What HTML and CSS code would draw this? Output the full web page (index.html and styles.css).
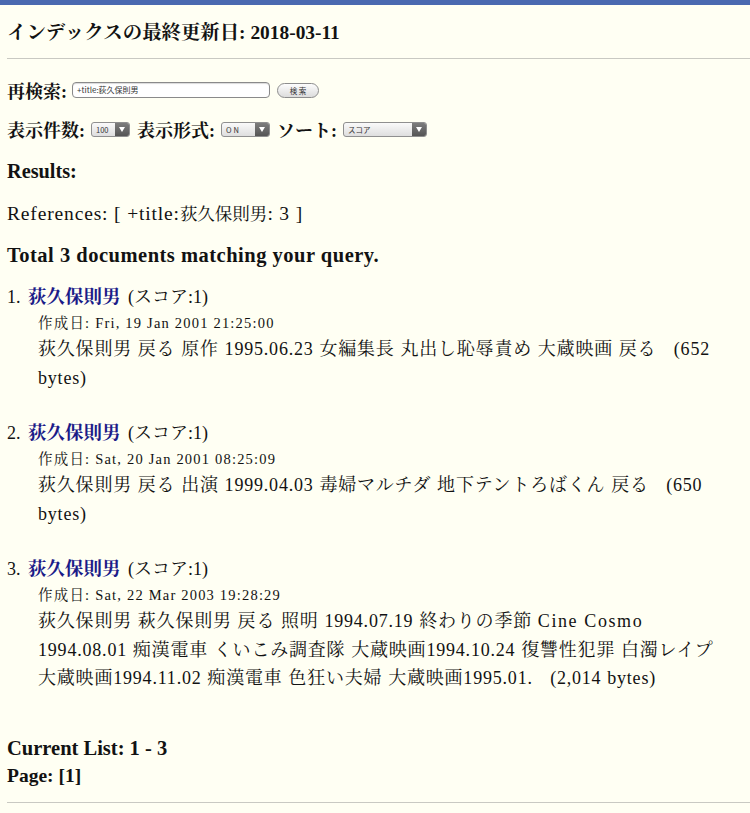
FILE: index.html
```html
<!DOCTYPE html>
<html lang="ja">
<head>
<meta charset="utf-8">
<title>検索結果</title>
<link rel="stylesheet" href="styles.css">
</head>
<body>
<div class="page">
  <h2 class="title">インデックスの最終更新日: 2018-03-11</h2>
  <hr class="rule">
  <form class="form">
    <div class="row">
      <span class="label">再検索:</span>
      <span class="textbox">+title:荻久保則男</span>
      <span class="button">検 索</span>
    </div>
    <div class="row row2">
      <span class="label">表示件数:</span>
      <span class="select s-num"><span class="sel-text">100</span><span class="arrow"></span></span>
      <span class="label">表示形式:</span>
      <span class="select s-fmt"><span class="sel-text wide">ON</span><span class="arrow"></span></span>
      <span class="label">ソート:</span>
      <span class="select s-sort"><span class="sel-text">スコア</span><span class="arrow"></span></span>
    </div>
  </form>
  <h3 class="results">Results:</h3>
  <p class="refs">References: [ +title:<span class="cjk">荻久保則男</span>: 3 ]</p>
  <p class="total">Total 3 documents matching your query.</p>
  <dl class="hits">
    <dt class="hit-head">1. <a href="#" class="hit-link">荻久保則男</a> (スコア:1)</dt>
    <dd class="hit-body">
      <div class="date">作成日: Fri, 19 Jan 2001 21:25:00</div>
      <div class="summary">荻久保則男 戻る 原作 1995.06.23 女編集長 丸出し恥辱責め 大蔵映画 戻る&nbsp;&nbsp; (652 bytes)</div>
    </dd>
    <dt class="hit-head">2. <a href="#" class="hit-link">荻久保則男</a> (スコア:1)</dt>
    <dd class="hit-body">
      <div class="date">作成日: Sat, 20 Jan 2001 08:25:09</div>
      <div class="summary">荻久保則男 戻る 出演 1999.04.03 毒婦マルチダ 地下テントろばくん 戻る&nbsp;&nbsp; (650 bytes)</div>
    </dd>
    <dt class="hit-head">3. <a href="#" class="hit-link">荻久保則男</a> (スコア:1)</dt>
    <dd class="hit-body">
      <div class="date">作成日: Sat, 22 Mar 2003 19:28:29</div>
      <div class="summary">荻久保則男 萩久保則男 戻る 照明 1994.07.19 終わりの季節 <span class="lat">Cine Cosmo</span> 1994.08.01 痴漢電車 くいこみ調査隊 大蔵映画1994.10.24 復讐性犯罪 白濁レイプ 大蔵映画1994.11.02 痴漢電車 色狂い夫婦 大蔵映画1995.01.&nbsp;&nbsp; (2,014 bytes)</div>
    </dd>
  </dl>
  <p class="current">Current List: 1 - 3</p>
  <p class="pager">Page: [1]</p>
  <hr class="rule bottom">
</div>
</body>
</html>
```

FILE: styles.css
```css
html, body {
  margin: 0;
  padding: 0;
  background: #fffff3;
}
body {
  border-top: 5px solid #4a69b0;
  font-family: "Liberation Serif", "Noto Serif CJK JP", "Noto Sans CJK JP", serif;
  color: #121212;
}
.page {
  padding: 0 7px;
}
.title {
  margin: 14px 0 0;
  font-size: 19.4px;
  line-height: 28px;
  font-weight: bold;
}
.rule {
  margin: 11px -7px 0 0;
  border: 0;
  border-top: 1px solid #c9c9c2;
  height: 0;
}
.form {
  margin: 0;
}
.row {
  display: flex;
  align-items: center;
  height: 28px;
  margin-top: 17px;
}
.row2 {
  margin-top: 11px;
}
.label {
  font-size: 18px;
  font-weight: bold;
  margin-right: 6px;
}
.row2 .select {
  margin-right: 7px;
}
.textbox {
  box-sizing: border-box;
  width: 198px;
  height: 16px;
  margin-left: -1px;
  border: 1px solid #8a8a8a;
  border-radius: 4px;
  background: #fff;
  font-family: "Noto Sans CJK JP", sans-serif;
  font-size: 8px;
  line-height: 14px;
  padding: 0 4px;
  color: #333;
  box-shadow: inset 0 1px 1px rgba(0,0,0,0.15);
}
.button {
  box-sizing: border-box;
  width: 42px;
  height: 15px;
  margin-left: 7px;
  border: 1px solid #8d8d8d;
  border-radius: 8px;
  background: linear-gradient(#fdfdfd, #dcdcdc);
  font-family: "Noto Sans CJK JP", sans-serif;
  font-size: 7.5px;
  line-height: 13px;
  text-align: center;
  color: #333;
}
.select {
  box-sizing: border-box;
  display: flex;
  align-items: stretch;
  height: 15px;
  border: 1px solid #8f8f8f;
  border-radius: 3px;
  background: linear-gradient(#fafafa, #dedede);
  overflow: hidden;
}
.sel-text {
  flex: 1;
  font-family: "Noto Sans CJK JP", sans-serif;
  font-size: 7.5px;
  line-height: 13px;
  padding-left: 4px;
  color: #333;
}
.sel-text.wide {
  letter-spacing: 2px;
}
.arrow {
  width: 14px;
  background: linear-gradient(#7d7d7d, #555);
  position: relative;
}
.arrow::after {
  content: "";
  position: absolute;
  left: 4px;
  top: 4px;
  border-left: 3px solid transparent;
  border-right: 3px solid transparent;
  border-top: 5px solid #fff;
}
.s-num { width: 39px; }
.s-fmt { width: 49px; }
.s-sort { width: 84px; }
.results {
  margin: 14px 0 0;
  font-size: 20.3px;
  line-height: 28px;
  font-weight: bold;
}
.refs {
  margin: 15px 0 0;
  font-size: 19.5px;
  letter-spacing: 0.85px;
  line-height: 28px;
}
.cjk {
  font-size: 17.5px;
  letter-spacing: 0;
}
.total {
  margin: 13px 0 0;
  font-size: 20.5px;
  letter-spacing: 0.5px;
  line-height: 28px;
  font-weight: bold;
}
.hits {
  margin: 14px 0 0;
}
.hit-head {
  font-size: 18px;
  line-height: 28px;
  word-spacing: 3px;
}
.hit-head ~ .hit-head {
  margin-top: 27px;
}
.hit-link {
  color: #1b1b88;
  font-size: 18.5px;
  font-weight: bold;
  text-decoration: none;
  word-spacing: 0;
}
.hit-body {
  margin: 0 0 0 31px;
}
.date {
  font-size: 14.5px;
  letter-spacing: 1.2px;
  line-height: 24px;
}
.summary {
  font-size: 18px;
  line-height: 28.5px;
  letter-spacing: 0.8px;
  word-spacing: 0.5px;
  padding-right: 18px;
}
.lat {
  letter-spacing: 1.6px;
  word-spacing: 0;
}
.current {
  margin: 41px 0 0;
  font-size: 20.5px;
  line-height: 28px;
  font-weight: bold;
}
.pager {
  margin: 0;
  font-size: 19.5px;
  line-height: 28px;
  font-weight: bold;
}
.bottom {
  margin-top: 12px;
}
```
